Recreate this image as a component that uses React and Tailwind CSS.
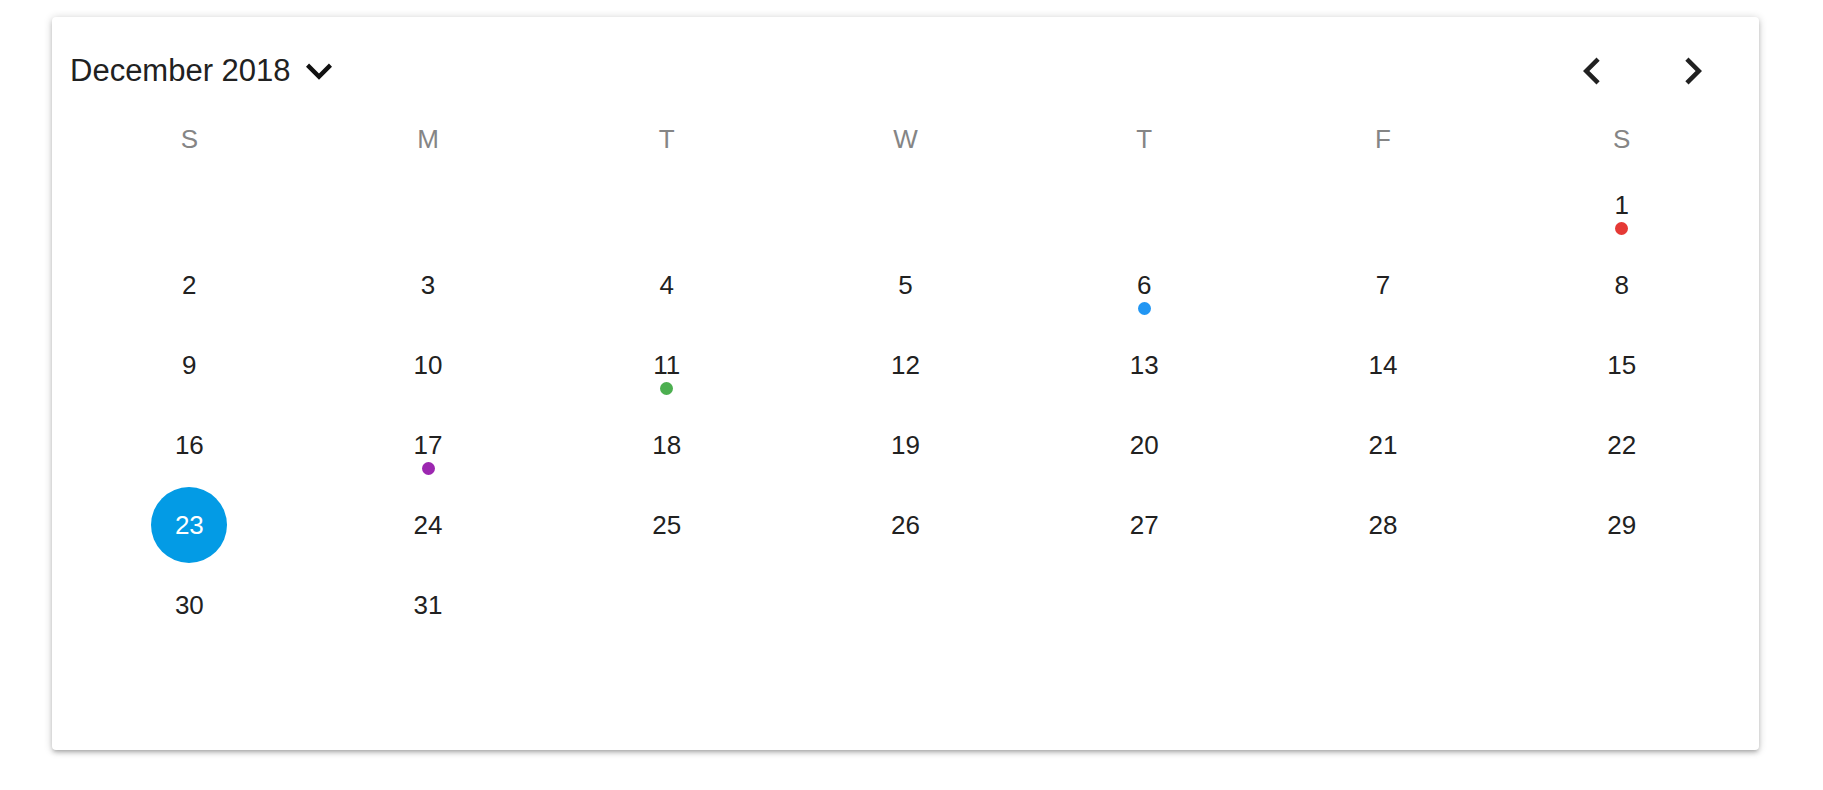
import { useState } from 'react'

const WEEKDAYS = ['S', 'M', 'T', 'W', 'T', 'F', 'S']

// event markers shown under a day
const EVENTS = {
  1: 'bg-[#e53935]',
  6: 'bg-[#2196f3]',
  11: 'bg-[#4caf50]',
  17: 'bg-[#9c27b0]',
}

function buildWeeks() {
  // December 2018 starts on a Saturday
  const cells = Array(6).fill(null)
  for (let d = 1; d <= 31; d++) cells.push(d)
  while (cells.length % 7) cells.push(null)
  const weeks = []
  for (let i = 0; i < cells.length; i += 7) weeks.push(cells.slice(i, i + 7))
  return weeks
}

function ChevronLeft() {
  return (
    <svg viewBox="0 0 24 24" className="w-[54px] h-[54px] fill-[#212121]">
      <path d="M15.41 7.41L14 6l-6 6 6 6 1.41-1.41L10.83 12z" />
    </svg>
  )
}

function ChevronRight() {
  return (
    <svg viewBox="0 0 24 24" className="w-[54px] h-[54px] fill-[#212121]">
      <path d="M10 6L8.59 7.41 13.17 12l-4.58 4.59L10 18l6-6z" />
    </svg>
  )
}

function ExpandMore() {
  return (
    <svg viewBox="0 0 24 24" className="w-[52px] h-[52px] fill-[#111]">
      <path d="M16.59 8.59L12 13.17 7.41 8.59 6 10l6 6 6-6z" />
    </svg>
  )
}

export default function App() {
  const [selected, setSelected] = useState(23)
  const weeks = buildWeeks()

  return (
    <div className="min-h-screen bg-white pt-[17px] pl-[52px] font-['Liberation_Sans',Arial,sans-serif]">
      <div className="w-[1707px] h-[733px] bg-white rounded-[4px] px-[18px] pt-[22px] shadow-[0px_1px_8px_0px_rgba(0,0,0,0.2),0px_3px_4px_0px_rgba(0,0,0,0.14),0px_3px_3px_-2px_rgba(0,0,0,0.12)]">
        <div className="h-[63px] flex items-center justify-between">
          <div className="flex items-center">
            <span className="text-[31px] leading-[36px] text-[#212121]">December 2018</span>
            <button className="ml-[2px] flex items-center">
              <ExpandMore />
            </button>
          </div>
          <div className="flex items-center gap-[47px] mr-[21px]">
            <button className="flex items-center"><ChevronLeft /></button>
            <button className="flex items-center"><ChevronRight /></button>
          </div>
        </div>

        <div className="grid grid-cols-7 h-[74px] items-center">
          {WEEKDAYS.map((d, i) => (
            <div key={i} className="text-center text-[26px] leading-[30px] text-[#858585]">{d}</div>
          ))}
        </div>

        {weeks.map((week, wi) => (
          <div key={wi} className="grid grid-cols-7 h-[80px]">
            {week.map((day, di) => (
              <div key={di} className="flex flex-col items-center pt-[14px]">
                {day && (
                  <>
                    {day === selected ? (
                      <span className="w-[76px] h-[76px] -my-[23px] rounded-full bg-[#039be5] text-white flex items-center justify-center text-[26px] leading-[30px]">
                        {day}
                      </span>
                    ) : (
                      <span
                        onClick={() => setSelected(day)}
                        className="text-[26px] leading-[30px] text-[#212121] cursor-pointer"
                      >
                        {day}
                      </span>
                    )}
                    {EVENTS[day] && <span className={`mt-[2px] w-[13px] h-[13px] rounded-full ${EVENTS[day]}`} />}
                  </>
                )}
              </div>
            ))}
          </div>
        ))}
      </div>
    </div>
  )
}
